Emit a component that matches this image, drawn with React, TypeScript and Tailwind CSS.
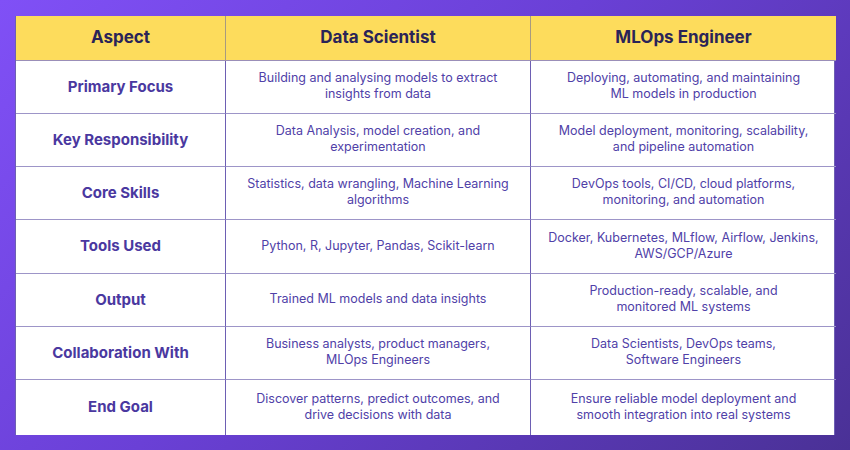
const rows: [string, string[], string[]][] = [
  ['Primary Focus', ['Building and analysing models to extract', 'insights from data'], ['Deploying, automating, and maintaining', 'ML models in production']],
  ['Key Responsibility', ['Data Analysis, model creation, and', 'experimentation'], ['Model deployment, monitoring, scalability,', 'and pipeline automation']],
  ['Core Skills', ['Statistics, data wrangling, Machine Learning', 'algorithms'], ['DevOps tools, CI/CD, cloud platforms,', 'monitoring, and automation']],
  ['Tools Used', ['Python, R, Jupyter, Pandas, Scikit-learn'], ['Docker, Kubernetes, MLflow, Airflow, Jenkins,', 'AWS/GCP/Azure']],
  ['Output', ['Trained ML models and data insights'], ['Production-ready, scalable, and', 'monitored ML systems']],
  ['Collaboration With', ['Business analysts, product managers,', 'MLOps Engineers'], ['Data Scientists, DevOps teams,', 'Software Engineers']],
  ['End Goal', ['Discover patterns, predict outcomes, and', 'drive decisions with data'], ['Ensure reliable model deployment and', 'smooth integration into real systems']],
]

function Lines({ lines }: { lines: string[] }) {
  return (
    <p className="whitespace-nowrap">
      {lines.map((l, i) => (
        <span key={i} className="block">{l}</span>
      ))}
    </p>
  )
}

export default function App() {
  return (
    <div
      className="w-[850px] h-[450px] bg-[linear-gradient(135deg,#8050f6_0%,#6a40d6_45%,#4a3196_100%)] pt-4 pl-[15px]"
      style={{ fontFamily: 'Inter, "Open Sans", sans-serif' }}
    >
      <div className="w-[820px] grid grid-cols-[210px_305px_305px] grid-rows-[45px_53px_53px_53px_54px_53px_53px_55px] bg-white border-l border-r border-[#6d5fb3]">
        {/* header */}
        <div className="flex items-center justify-center bg-[#fddc5c] border-r border-[#a89a80] border-b border-b-[#9b8fb8] text-[17px] font-bold text-[#2a2458]">Aspect</div>
        <div className="flex items-center justify-center bg-[#fddc5c] border-r border-[#a89a80] border-b border-b-[#9b8fb8] text-[17px] font-bold text-[#2a2458]">Data Scientist</div>
        <div className="flex items-center justify-center bg-[#fddc5c] border-b border-b-[#9b8fb8] text-[17px] font-bold text-[#2a2458]">MLOps Engineer</div>

        {rows.map((r, i) => (
          <div key={i} className="contents">
            <div className={`flex items-center justify-center border-r border-[#6d5fb3] text-[15px] font-bold text-[#4a38a0] ${i < rows.length - 1 ? 'border-b border-b-[#9d95c8]' : ''}`}>
              {r[0]}
            </div>
            <div className={`flex items-center justify-center pb-[2px] border-r border-[#6d5fb3] text-center text-[12.5px] leading-4 text-[#5041a8] ${i < rows.length - 1 ? 'border-b border-b-[#9d95c8]' : ''}`}>
              <Lines lines={r[1]} />
            </div>
            <div className={`flex items-center justify-center pb-[2px] text-center text-[12.5px] leading-4 text-[#5041a8] ${i < rows.length - 1 ? 'border-b border-b-[#9d95c8]' : ''}`}>
              <Lines lines={r[2]} />
            </div>
          </div>
        ))}
      </div>
    </div>
  )
}
